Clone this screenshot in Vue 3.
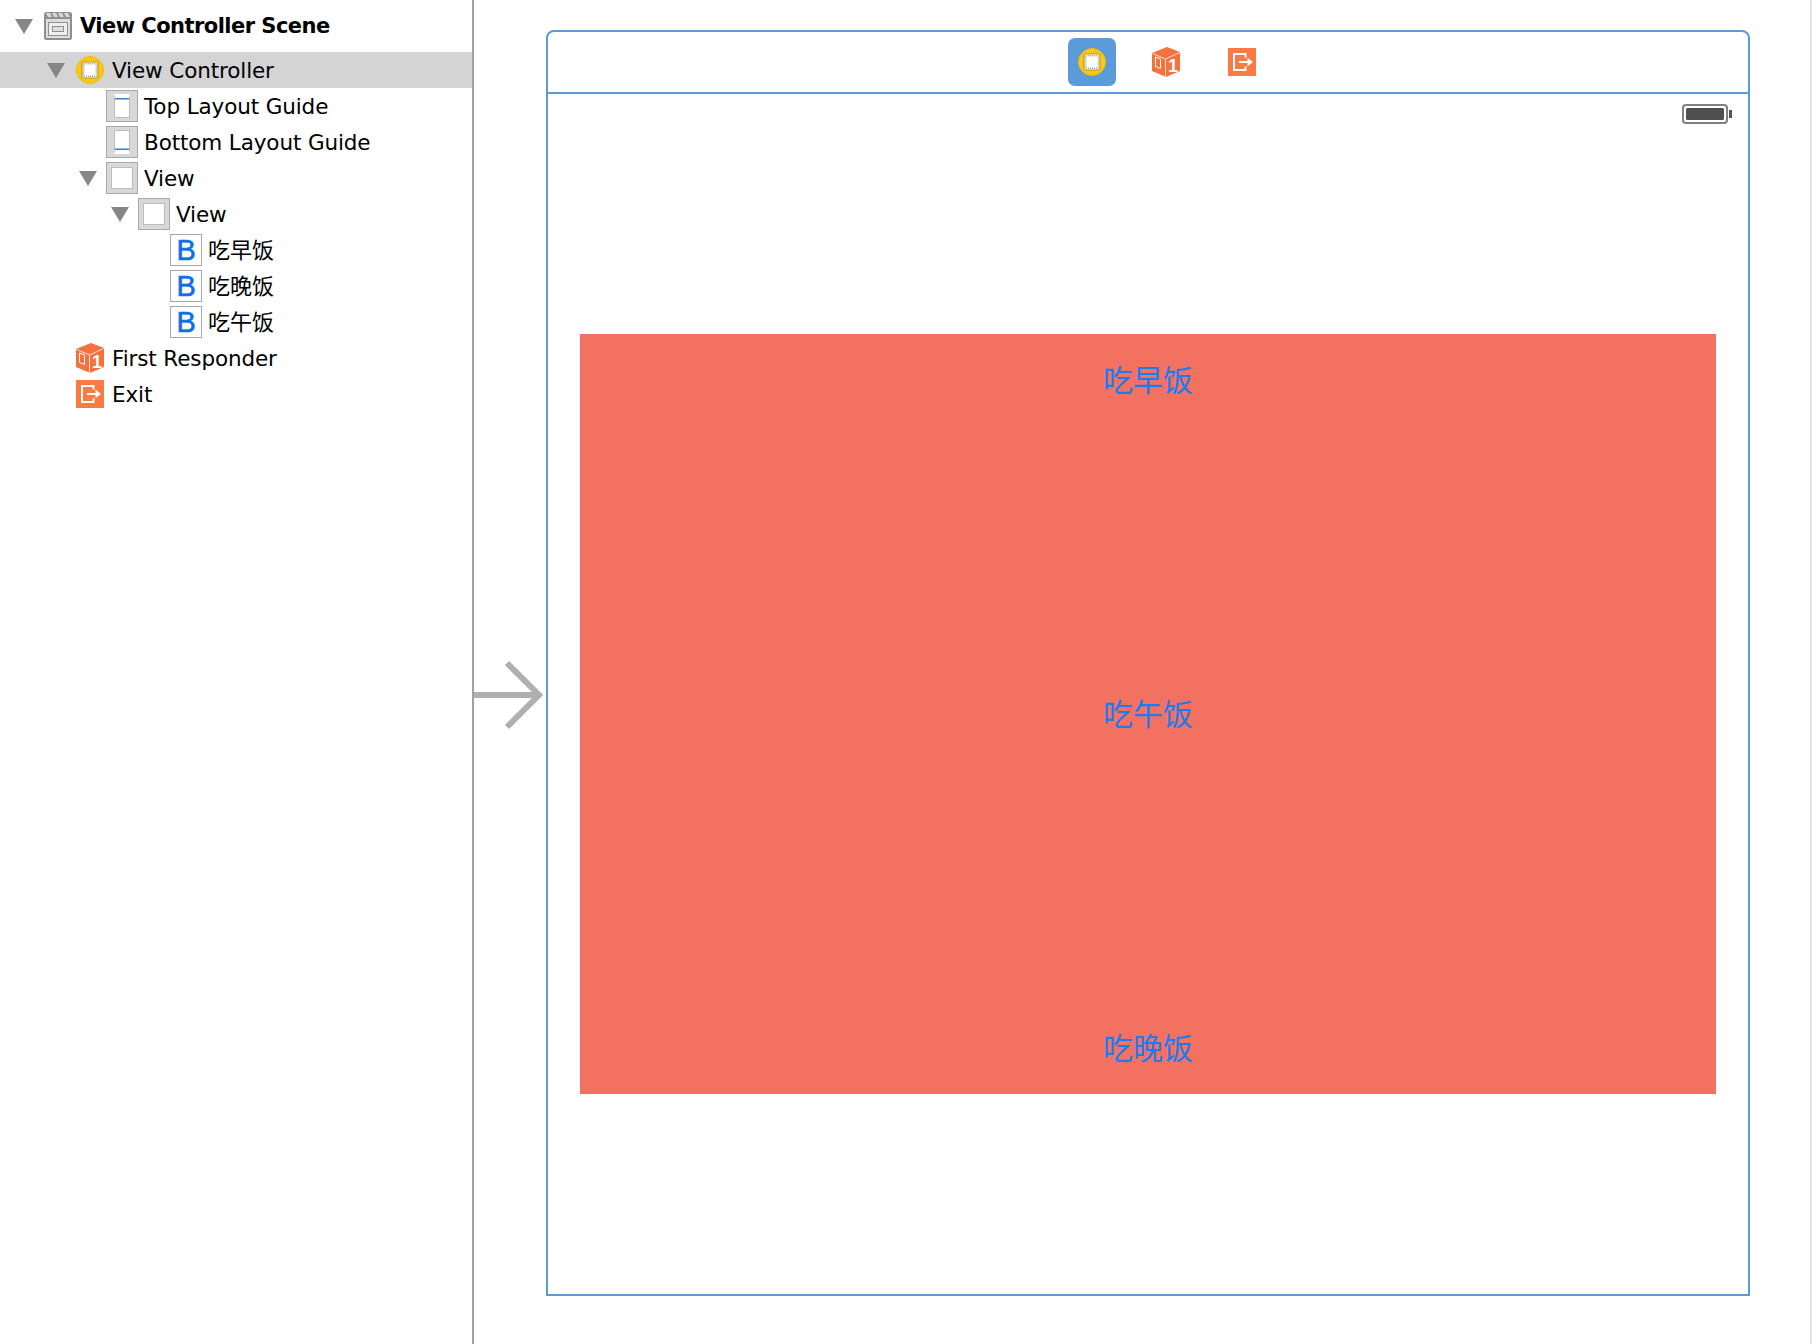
<template>
  <div class="page">
    <svg class="defs" aria-hidden="true">
      <symbol id="scene" viewBox="0 0 28 28">
        <rect x="0" y="0" width="28" height="28" rx="2.5" fill="#8f8f8f" />
        <path d="M2 1h4l2 4H4zM8 1h4l2 4h-4zM14 1h4l2 4h-4zM20 1h4l2 4h-4z" fill="#d8d8d8" />
        <rect x="2" y="7" width="24" height="19" fill="#dedede" />
        <rect x="4.5" y="10.5" width="19" height="13" fill="#efefef" stroke="#8f8f8f" />
        <rect x="8.5" y="14.5" width="11" height="5" fill="#dedede" stroke="#8f8f8f" />
      </symbol>
      <symbol id="vc" viewBox="0 0 28 28">
        <circle cx="14" cy="14" r="13.5" fill="#fdc80e" stroke="#eab918" />
        <rect x="6" y="6" width="16" height="16" rx="1.5" fill="#fff" stroke="#b3982e" stroke-width="1.2" />
        <rect x="7.8" y="7.8" width="12.4" height="12.4" fill="#fff" stroke="#77755f" stroke-width="1" stroke-dasharray="1 1" />
      </symbol>
      <symbol id="cube" viewBox="0 0 28 30">
        <path d="M15 0 28 5V24L14 30 0 24V6Z" fill="#f5723f" />
        <path d="M0.5 6.5 13.5 12 27.5 5.5M13.5 12V30" fill="none" stroke="#fff" stroke-width="0.8" />
        <path d="M3.5 10 8.5 12V21.5L3.5 19.5Z" fill="none" stroke="#fff" stroke-width="1" />
        <text x="21" y="25" text-anchor="middle" class="cube-num">1</text>
      </symbol>
      <symbol id="exit" viewBox="0 0 28 28">
        <rect width="28" height="28" fill="#f97a42" />
        <path d="M17.5 9.5V6H6v16h11.5v-3.5" fill="none" stroke="#fff" stroke-width="2" />
        <path d="M11 13h8.5V9.5L25 14l-5.5 4.5V15H11Z" fill="#fff" />
      </symbol>
    </svg>

    <aside class="outline">
      <div
        v-for="row in rows"
        :key="row.id"
        class="row"
        :class="[`level-${row.level}`, { selected: row.selected, scene: row.level === 0 }]"
      >
        <span class="twist"><i v-if="row.open" class="triangle"></i></span>
        <span class="icon">
          <svg v-if="row.icon === 'cube'" class="sym cube"><use href="#cube" /></svg>
          <svg v-else-if="symbols.includes(row.icon)" class="sym"><use :href="`#${row.icon}`" /></svg>
          <span v-else-if="row.icon === 'button'" class="btn-icon">B</span>
          <span v-else class="box" :class="row.icon"><i></i></span>
        </span>
        <span class="label" :class="{ cjk: row.icon === 'button' }">{{ row.label }}</span>
      </div>
    </aside>

    <div class="entry">
      <svg width="72" height="70" viewBox="0 0 72 70">
        <path d="M0 35H65M33 3 65 35 33 67" fill="none" stroke="#b0b0b0" stroke-width="6" />
      </svg>
    </div>

    <section class="frame">
      <header class="dock">
        <span class="dock-item active"><svg class="sym"><use href="#vc" /></svg></span>
        <span class="dock-item"><svg class="sym cube"><use href="#cube" /></svg></span>
        <span class="dock-item"><svg class="sym"><use href="#exit" /></svg></span>
      </header>
      <div class="screen">
        <div class="status">
          <svg width="50" height="20" viewBox="0 0 50 20">
            <rect x="1" y="1" width="44" height="18" rx="3" fill="#fff" stroke="#808080" stroke-width="2" />
            <rect x="4" y="4" width="38" height="12" rx="1.5" fill="#4f4f4f" />
            <rect x="47" y="6" width="3" height="8" fill="#555" />
          </svg>
        </div>
        <div class="red-view">
          <button v-for="meal in meals" :key="meal" class="meal">{{ meal }}</button>
        </div>
      </div>
    </section>
  </div>
</template>

<script setup>
const symbols = ['scene', 'vc', 'exit']
const meals = ['吃早饭', '吃午饭', '吃晚饭']

const rows = [
  { id: 1, level: 0, open: true, icon: 'scene', label: 'View Controller Scene' },
  { id: 2, level: 1, open: true, icon: 'vc', label: 'View Controller', selected: true },
  { id: 3, level: 2, icon: 'guide-top', label: 'Top Layout Guide' },
  { id: 4, level: 2, icon: 'guide-bottom', label: 'Bottom Layout Guide' },
  { id: 5, level: 2, open: true, icon: 'view', label: 'View' },
  { id: 6, level: 3, open: true, icon: 'view', label: 'View' },
  { id: 7, level: 4, icon: 'button', label: '吃早饭' },
  { id: 8, level: 4, icon: 'button', label: '吃晚饭' },
  { id: 9, level: 4, icon: 'button', label: '吃午饭' },
  { id: 10, level: 1, icon: 'cube', label: 'First Responder' },
  { id: 11, level: 1, icon: 'exit', label: 'Exit' }
]
</script>

<style>
html,
body {
  margin: 0;
  background: #fff;
}
</style>

<style scoped>
.page {
  display: flex;
  box-sizing: border-box;
  width: 1812px;
  height: 1344px;
  overflow: hidden;
  background: #fff;
  border-right: 2px solid #e2e2e2;
  font-family: "DejaVu Sans", "Noto Sans CJK SC", sans-serif;
  color: #000;
}

.defs {
  display: none;
}

.cube-num {
  font-family: "Liberation Sans", sans-serif;
  font-weight: 700;
  font-size: 18px;
  fill: #fff;
}

/* Outline */
.outline {
  width: 472px;
  flex: none;
  padding-top: 8px;
  border-right: 2px solid #a0a0a0;
}

.row {
  display: flex;
  align-items: center;
  height: 36px;
  font-size: 21.5px;
  letter-spacing: -0.12px;
  white-space: nowrap;
}

.row.scene {
  margin-bottom: 8px;
  font-weight: 700;
  font-size: 21px;
  letter-spacing: -0.54px;
}

.row.selected {
  background: #d4d4d4;
}

.level-0 { padding-left: 8px; }
.level-1 { padding-left: 40px; }
.level-2 { padding-left: 72px; }
.level-3 { padding-left: 104px; }
.level-4 { padding-left: 136px; }

.twist {
  display: flex;
  justify-content: center;
  width: 32px;
  flex: none;
}

.triangle {
  width: 0;
  height: 0;
  border-left: 9px solid transparent;
  border-right: 9px solid transparent;
  border-top: 15px solid #878787;
}

.icon {
  display: flex;
  align-items: center;
  justify-content: center;
  width: 32px;
  height: 32px;
  margin: 0 6px 0 2px;
  flex: none;
}

.label.cjk {
  padding-bottom: 4px;
  font-size: 22px;
  letter-spacing: 0;
}

.sym {
  display: block;
  width: 28px;
  height: 28px;
}

.sym.cube {
  height: 30px;
}

.box {
  display: flex;
  align-items: center;
  justify-content: center;
  box-sizing: border-box;
  width: 32px;
  height: 32px;
  border: 1.5px solid #a8a8a8;
  background: #d8d8d8;
}

.box i {
  display: block;
  box-sizing: border-box;
  width: 16px;
  height: 24px;
  background: #fff;
  border: 1px solid #bcbcbc;
}

.box.guide-top i {
  border-top: 4px solid #fff;
  box-shadow: inset 0 1.5px 0 #2f7fc4;
}

.box.guide-bottom i {
  border-bottom: 4px solid #fff;
  box-shadow: inset 0 -1.5px 0 #2f7fc4;
}

.box.view i {
  width: 22px;
  height: 22px;
}

.btn-icon {
  box-sizing: border-box;
  width: 32px;
  height: 32px;
  border: 1.5px solid #a8a8a8;
  background: #fff;
  color: #0f6fe6;
  font-family: "Liberation Sans", sans-serif;
  font-size: 29px;
  line-height: 30px;
  text-align: center;
  -webkit-text-stroke: 0.6px #0f6fe6;
}

/* Entry arrow */
.entry {
  width: 72px;
  flex: none;
  padding-top: 660px;
}

.entry svg {
  display: block;
}

/* Scene frame */
.frame {
  display: flex;
  flex-direction: column;
  box-sizing: border-box;
  width: 1204px;
  height: 1266px;
  margin-top: 30px;
  flex: none;
  border: 2px solid #5b9bd9;
  border-radius: 8px 8px 0 0;
}

.dock {
  display: flex;
  align-items: center;
  justify-content: center;
  gap: 26px;
  height: 60px;
  flex: none;
  padding-left: 38px;
  border-bottom: 2px solid #5b9bd9;
}

.dock-item {
  display: flex;
  align-items: center;
  justify-content: center;
  width: 48px;
  height: 48px;
  border-radius: 7px;
}

.dock-item:last-child {
  margin-left: 2px;
}

.dock-item.active {
  background: #5b9bd9;
}

.screen {
  flex: 1;
  padding: 0 32px;
}

.status {
  display: flex;
  justify-content: flex-end;
  height: 240px;
  margin-right: -16px;
  padding-top: 10px;
  box-sizing: border-box;
}

.red-view {
  display: flex;
  flex-direction: column;
  justify-content: space-between;
  align-items: center;
  box-sizing: border-box;
  width: 1136px;
  height: 760px;
  padding: 21px 0 25px;
  background: #f27161;
}

.meal {
  padding: 0;
  border: 0;
  background: none;
  color: #1a7bf2;
  font-family: "Noto Sans CJK SC", sans-serif;
  font-size: 30px;
  line-height: 46px;
}
</style>
